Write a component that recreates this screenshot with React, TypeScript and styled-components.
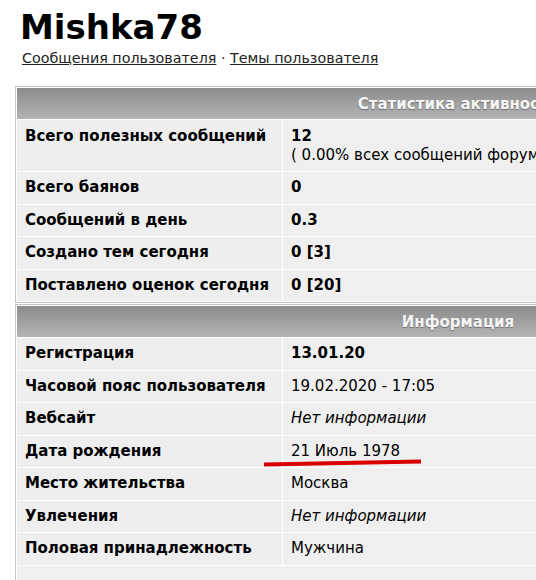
import React from 'react';
import styled, { createGlobalStyle } from 'styled-components';

const GlobalStyle = createGlobalStyle`
  html, body {
    margin: 0;
    padding: 0;
    background: #ffffff;
    overflow: hidden;
  }
  body {
    font-family: 'DejaVu Sans', Verdana, sans-serif;
    color: #000000;
  }
`;

const Page = styled.div`
  position: relative;
  padding: 8px 0 0 15px;
  width: 900px;
`;

const UserName = styled.h1`
  margin: 0 0 0 5px;
  font-size: 34px;
  line-height: 38px;
  font-weight: bold;
`;

const UserLinks = styled.div`
  margin: 4px 0 0 7px;
  font-size: 14.3px;
  line-height: 17px;
  color: #222222;

  a {
    color: #222222;
    text-decoration: underline;
  }
`;

const StatTable = styled.table<{ $gap?: number }>`
  margin-top: ${(p) => p.$gap ?? 0}px;
  width: 886px;
  border: 1px solid #c4c4c4;
  border-spacing: 1px;
  background: #ffffff;
`;

const HeadCell = styled.th`
  height: 31px;
  padding: 0;
  background: linear-gradient(#8c8c8c, #b4b4b4);
  color: #f6f6f6;
  font-size: 15px;
  font-weight: bold;
  text-align: center;
  text-shadow: 0 1px 1px rgba(0, 0, 0, 0.35);
`;

const Label = styled.td<{ $tall?: boolean }>`
  width: 249px;
  padding: ${(p) => (p.$tall ? '8px 8px 7px' : '7px 8px 7.5px')};
  background: #eeeeee;
  font-size: 15px;
  line-height: 17px;
  font-weight: bold;
  vertical-align: top;
  white-space: nowrap;
`;

const Value = styled.td<{ $bold?: boolean; $italic?: boolean; $tall?: boolean }>`
  padding: ${(p) => (p.$tall ? '8px 8px 7px' : '7px 8px 7.5px')};
  background: #efefef;
  font-size: 15px;
  line-height: 17px;
  font-weight: ${(p) => (p.$bold ? 'bold' : 'normal')};
  font-style: ${(p) => (p.$italic ? 'italic' : 'normal')};
  vertical-align: top;
  white-space: nowrap;
`;

const SubLine = styled.div`
  margin-top: 2px;
  font-weight: normal;
`;

const EmptyCell = styled.td`
  height: 22px;
  background: #efefef;
`;

const Mark = styled.svg`
  position: absolute;
  left: 262px;
  top: 458px;
  pointer-events: none;
`;

type Row = { label: string; value: string; bold?: boolean; italic?: boolean };

const stats: Row[] = [
  { label: 'Всего баянов', value: '0', bold: true },
  { label: 'Сообщений в день', value: '0.3', bold: true },
  { label: 'Создано тем сегодня', value: '0 [3]', bold: true },
  { label: 'Поставлено оценок сегодня', value: '0 [20]', bold: true },
];

const info: Row[] = [
  { label: 'Регистрация', value: '13.01.20', bold: true },
  { label: 'Часовой пояс пользователя', value: '19.02.2020 - 17:05' },
  { label: 'Вебсайт', value: 'Нет информации', italic: true },
  { label: 'Дата рождения', value: '21 Июль 1978' },
  { label: 'Место жительства', value: 'Москва' },
  { label: 'Увлечения', value: 'Нет информации', italic: true },
  { label: 'Половая принадлежность', value: 'Мужчина' },
];

const renderRow = (r: Row) => (
  <tr key={r.label}>
    <Label>{r.label}</Label>
    <Value $bold={r.bold} $italic={r.italic}>
      {r.value}
    </Value>
  </tr>
);

const App: React.FC = () => {
  return (
    <Page>
      <GlobalStyle />
      <UserName>Mishka78</UserName>
      <UserLinks>
        <a href="#">Сообщения пользователя</a> · <a href="#">Темы пользователя</a>
      </UserLinks>

      <StatTable $gap={19}>
        <tbody>
          <tr>
            <HeadCell colSpan={2}>Статистика активности </HeadCell>
          </tr>
          <tr>
            <Label $tall>Всего полезных сообщений</Label>
            <Value $bold $tall>
              12
              <SubLine>( 0.00% всех сообщений форума )</SubLine>
            </Value>
          </tr>
          {stats.map(renderRow)}
        </tbody>
      </StatTable>

      <StatTable $gap={1}>
        <tbody>
          <tr>
            <HeadCell colSpan={2}>Информация</HeadCell>
          </tr>
          {info.map(renderRow)}
          <tr>
            <EmptyCell colSpan={2} />
          </tr>
        </tbody>
      </StatTable>

      <Mark width="162" height="10" viewBox="0 0 162 10">
        <path d="M2 6.5 L159 3.5" stroke="#d80000" strokeWidth="4" strokeLinecap="butt" />
      </Mark>
    </Page>
  );
};

export default App;
